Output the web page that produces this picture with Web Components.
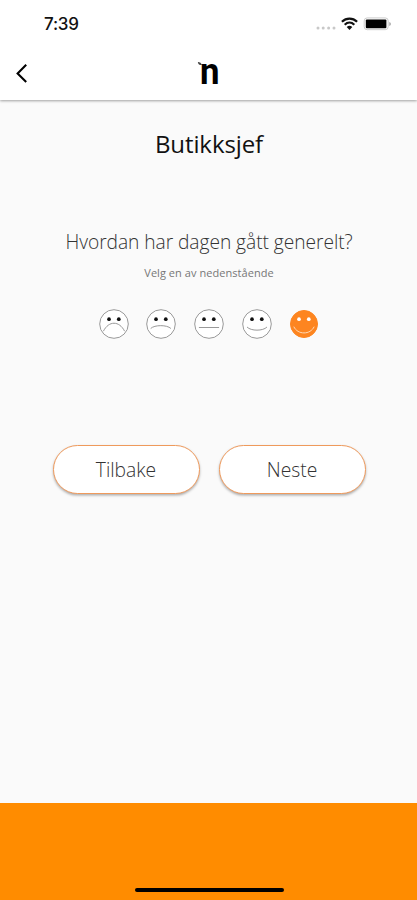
<!DOCTYPE html>
<html lang="nb">
<head>
  <meta charset="utf-8">
  <meta name="viewport" content="width=device-width, initial-scale=1">
  <title>Butikksjef</title>
  <style>
    body {
      margin: 0;
      font-family: "Open Sans", "Noto Sans", sans-serif;
    }
  </style>
</head>
<body>
  <survey-screen></survey-screen>

  <script>
    class BaseElement extends HTMLElement {

      constructor() {
        super();
        this.attachShadow({ mode: "open" });
      }

      connectedCallback() {
        const template = document.createElement("template");
        template.innerHTML = `<style>${this.getStyles()}</style>${this.getTemplate()}`;
        this.shadowRoot.replaceChildren(template.content.cloneNode(true));
      }
    }

    class StatusBar extends BaseElement {

      getStyles() {
        return `
          :host {
            display: flex;
            align-items: center;
            justify-content: space-between;
            height: 48px;
            padding: 0 26px 0 44px;
            box-sizing: border-box;
          }
          time {
            font: 500 17px/20px Inter, sans-serif;
            letter-spacing: -0.25px;
            color: #111;
          }
          svg { display: block; }
        `;
      }

      getTemplate() {
        return `
          <time>7:39</time>
          <svg width="75" height="16" viewBox="0 0 75 16">
            <g fill="#c8c8c8">
              <circle cx="2" cy="12" r="1.5"/>
              <circle cx="7.2" cy="12" r="1.5"/>
              <circle cx="12.6" cy="12" r="1.5"/>
              <circle cx="18" cy="12" r="1.5"/>
            </g>
            <g fill="none" stroke="#111" stroke-width="2.2">
              <path d="M25.9 5.7C30.3 1.5 36.7 1.5 41.1 5.7"/>
              <path d="M28.7 8.7C31.6 6 35.4 6 38.3 8.7"/>
            </g>
            <path d="M30.7 10.9Q33.5 8.7 36.3 10.9L33.5 14Z" fill="#111"/>
            <rect x="48.2" y="1.9" width="24" height="11.8" rx="3" fill="#fff" stroke="#ccc"/>
            <rect x="49.8" y="3.4" width="20.6" height="8.8" rx="1" fill="#000"/>
            <path d="M73.4 6v4q1.4-.6 1.4-2t-1.4-2" fill="#999"/>
          </svg>
        `;
      }
    }

    class BrandLogo extends BaseElement {

      getStyles() {
        return `
          :host { display: block; width: 24px; height: 48px; }
          svg { display: block; }
          text { font: 700 36px Roboto, sans-serif; }
        `;
      }

      getTemplate() {
        return `
          <svg width="24" height="48" viewBox="0 0 24 48">
            <text x="3" y="33.5" textLength="19.5" lengthAdjust="spacingAndGlyphs">n</text>
            <path d="M.8 12.2Q3.4 11.6 5.2 15Q1.5 15.4 .8 12.2Z" fill="#444"/>
          </svg>
        `;
      }
    }

    class NavBar extends BaseElement {

      getStyles() {
        return `
          :host {
            display: grid;
            grid-template-columns: 1fr auto 1fr;
            align-items: center;
            height: 52px;
            padding: 0 15px;
            box-sizing: border-box;
          }
          button {
            display: flex;
            padding: 0;
            border: 0;
            background: none;
          }
        `;
      }

      getTemplate() {
        return `
          <button aria-label="Tilbake">
            <svg width="14" height="20" viewBox="0 0 14 20">
              <path d="M11.2 .8L2.6 9.4L11.2 18" fill="none" stroke="#000" stroke-width="2.1"/>
            </svg>
          </button>
          <brand-logo></brand-logo>
        `;
      }
    }

    class MoodFace extends BaseElement {

      getStyles() {
        return `
          :host {
            display: block;
            width: 30px;
            height: 30px;
            --fill: #fff;
            --line: #999;
            --eye: #111;
          }
          :host([selected]) {
            --fill: #fd8520;
            --line: #fd8520;
            --eye: #fff;
          }
          svg { display: block; }
          .head { fill: var(--fill); stroke: var(--line); }
          .eyes { fill: var(--eye); }
          .mouth { fill: none; stroke: var(--line); stroke-linecap: round; }
          :host([selected]) .mouth { stroke: #ffd9b5; }
        `;
      }

      getTemplate() {
        const mouths = {
          awful: "M4.6 21.8C9.8 11.6 20.2 11.6 25.4 21.8",
          bad: "M5 19.2C8.5 15.7 21 15.7 24.6 19.2",
          neutral: "M5.3 18.5H24.7",
          good: "M5.3 18.3C9 22.2 21 22.2 24.7 18.3",
          great: "M5 18C8.6 26 21.4 26 25 18"
        };
        const radius = this.hasAttribute("selected") ? 13.5 : 14.3;

        return `
          <svg width="30" height="30" viewBox="0 0 30 30">
            <circle class="head" cx="15" cy="15" r="${radius}"/>
            <g class="eyes">
              <circle cx="10" cy="10.2" r="1.85"/>
              <circle cx="19.8" cy="10.2" r="1.85"/>
            </g>
            <path class="mouth" d="${mouths[this.getAttribute("mood")]}"/>
          </svg>
        `;
      }
    }

    class PillButton extends BaseElement {

      getStyles() {
        return `
          :host { display: block; width: 147px; height: 49px; }
          button {
            width: 100%;
            height: 100%;
            padding: 0;
            border: 1.5px solid #ef9a5c;
            border-radius: 25px;
            background: #fff;
            box-shadow: 0 1.5px 2.5px rgba(0, 0, 0, .3);
            font: 300 19.3px/26px "Open Sans", sans-serif;
            color: #333;
          }
        `;
      }

      getTemplate() {
        return `<button><slot></slot></button>`;
      }
    }

    class SurveyScreen extends BaseElement {

      getStyles() {
        return `
          :host {
            display: flex;
            flex-direction: column;
            height: 900px;
            background: #fafafa;
          }
          header {
            background: #fff;
            box-shadow: 0 1px 2.5px rgba(0, 0, 0, .36);
          }
          main {
            flex: 1;
            display: flex;
            flex-direction: column;
            align-items: center;
            padding-left: 1px;
          }
          h1, h2, p { margin: 0; white-space: nowrap; }
          h1 {
            margin-top: 28px;
            font-size: 24px;
            line-height: 32px;
            font-weight: 400;
            letter-spacing: -0.1px;
            color: #111;
          }
          h2 {
            margin-top: 69px;
            font-size: 19.2px;
            line-height: 26px;
            font-weight: 300;
            letter-spacing: -0.05px;
            color: #333;
          }
          p {
            margin-top: 10px;
            font-size: 11px;
            line-height: 16px;
            letter-spacing: 0.05px;
            color: #777;
          }
          .faces {
            display: flex;
            gap: 17.7px;
            margin-top: 28px;
          }
          .actions {
            display: flex;
            gap: 19px;
            margin-top: 106px;
          }
          footer {
            display: flex;
            align-items: flex-end;
            justify-content: center;
            height: 97px;
            padding: 0 0 8px 1px;
            box-sizing: border-box;
            background: #ff8c00;
          }
          .home {
            width: 149px;
            height: 4px;
            border-radius: 2px;
            background: #000;
          }
        `;
      }

      getTemplate() {
        return `
          <header>
            <status-bar></status-bar>
            <nav-bar></nav-bar>
          </header>
          <main>
            <h1>Butikksjef</h1>
            <h2>Hvordan har dagen gått generelt?</h2>
            <p>Velg en av nedenstående</p>
            <div class="faces">
              <mood-face mood="awful"></mood-face>
              <mood-face mood="bad"></mood-face>
              <mood-face mood="neutral"></mood-face>
              <mood-face mood="good"></mood-face>
              <mood-face mood="great" selected></mood-face>
            </div>
            <div class="actions">
              <pill-button>Tilbake</pill-button>
              <pill-button>Neste</pill-button>
            </div>
          </main>
          <footer><div class="home"></div></footer>
        `;
      }
    }

    customElements.define("status-bar", StatusBar);
    customElements.define("brand-logo", BrandLogo);
    customElements.define("nav-bar", NavBar);
    customElements.define("mood-face", MoodFace);
    customElements.define("pill-button", PillButton);
    customElements.define("survey-screen", SurveyScreen);
  </script>
</body>
</html>
